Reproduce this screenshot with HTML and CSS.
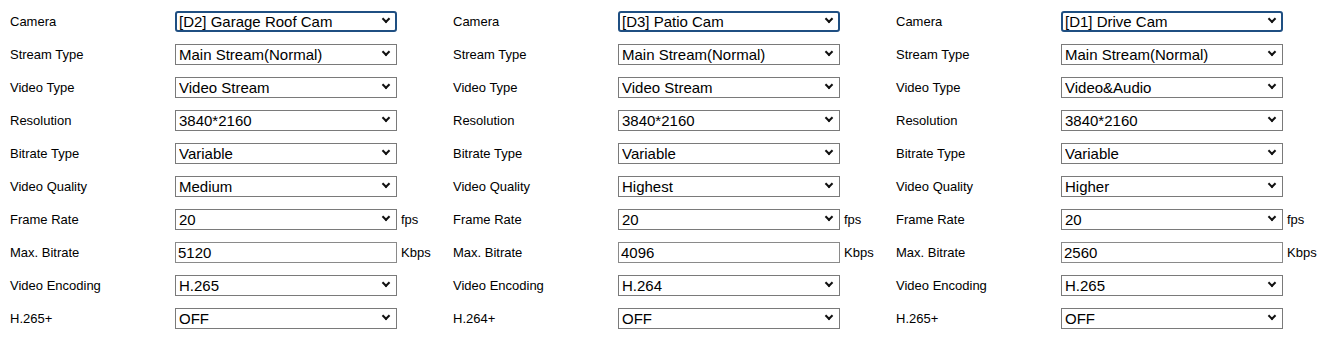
FILE: index.html
```html
<!DOCTYPE html>
<html lang="en">
<head>
  <meta charset="UTF-8">
  <title>Video Settings</title>
  <link rel="stylesheet" href="styles.css">
</head>
<body>

<div class="channels">

  <div class="channel">
    <label>Camera</label>
    <span class="sel"><select class="focus"><option>[D2] Garage Roof Cam</option></select></span>
    <span></span>
    <label>Stream Type</label>
    <span class="sel"><select><option>Main Stream(Normal)</option></select></span>
    <span></span>
    <label>Video Type</label>
    <span class="sel"><select><option>Video Stream</option></select></span>
    <span></span>
    <label>Resolution</label>
    <span class="sel"><select><option>3840*2160</option></select></span>
    <span></span>
    <label>Bitrate Type</label>
    <span class="sel"><select><option>Variable</option></select></span>
    <span></span>
    <label>Video Quality</label>
    <span class="sel"><select><option>Medium</option></select></span>
    <span></span>
    <label>Frame Rate</label>
    <span class="sel"><select><option>20</option></select></span>
    <span class="unit">fps</span>
    <label>Max. Bitrate</label>
    <input type="text" value="5120">
    <span class="unit">Kbps</span>
    <label>Video Encoding</label>
    <span class="sel"><select><option>H.265</option></select></span>
    <span></span>
    <label>H.265+</label>
    <span class="sel"><select><option>OFF</option></select></span>
    <span></span>
  </div>

  <div class="channel">
    <label>Camera</label>
    <span class="sel"><select class="focus"><option>[D3] Patio Cam</option></select></span>
    <span></span>
    <label>Stream Type</label>
    <span class="sel"><select><option>Main Stream(Normal)</option></select></span>
    <span></span>
    <label>Video Type</label>
    <span class="sel"><select><option>Video Stream</option></select></span>
    <span></span>
    <label>Resolution</label>
    <span class="sel"><select><option>3840*2160</option></select></span>
    <span></span>
    <label>Bitrate Type</label>
    <span class="sel"><select><option>Variable</option></select></span>
    <span></span>
    <label>Video Quality</label>
    <span class="sel"><select><option>Highest</option></select></span>
    <span></span>
    <label>Frame Rate</label>
    <span class="sel"><select><option>20</option></select></span>
    <span class="unit">fps</span>
    <label>Max. Bitrate</label>
    <input type="text" value="4096">
    <span class="unit">Kbps</span>
    <label>Video Encoding</label>
    <span class="sel"><select><option>H.264</option></select></span>
    <span></span>
    <label>H.264+</label>
    <span class="sel"><select><option>OFF</option></select></span>
    <span></span>
  </div>

  <div class="channel">
    <label>Camera</label>
    <span class="sel"><select class="focus"><option>[D1] Drive Cam</option></select></span>
    <span></span>
    <label>Stream Type</label>
    <span class="sel"><select><option>Main Stream(Normal)</option></select></span>
    <span></span>
    <label>Video Type</label>
    <span class="sel"><select><option>Video&amp;Audio</option></select></span>
    <span></span>
    <label>Resolution</label>
    <span class="sel"><select><option>3840*2160</option></select></span>
    <span></span>
    <label>Bitrate Type</label>
    <span class="sel"><select><option>Variable</option></select></span>
    <span></span>
    <label>Video Quality</label>
    <span class="sel"><select><option>Higher</option></select></span>
    <span></span>
    <label>Frame Rate</label>
    <span class="sel"><select><option>20</option></select></span>
    <span class="unit">fps</span>
    <label>Max. Bitrate</label>
    <input type="text" value="2560">
    <span class="unit">Kbps</span>
    <label>Video Encoding</label>
    <span class="sel"><select><option>H.265</option></select></span>
    <span></span>
    <label>H.265+</label>
    <span class="sel"><select><option>OFF</option></select></span>
    <span></span>
  </div>

</div>

</body>
</html>
```

FILE: styles.css
```css
body {
  font-family: 'Liberation Sans', Arial, sans-serif;
  background-color: #fff;
  color: #000;
  margin: 0;
  padding: 0;
  overflow: hidden;
}

.channels {
  display: flex;
  padding: 5px 0 0 10px;
}

.channel {
  flex: 0 0 443px;
  display: grid;
  grid-template-columns: 165px 222px auto;
  grid-auto-rows: 33px;
  align-items: center;
}

.channel label {
  font-size: 13px;
}

.sel {
  position: relative;
  display: block;
  height: 21px;
}

.sel::after {
  content: "";
  position: absolute;
  right: 8px;
  top: 5px;
  width: 4px;
  height: 4px;
  border-right: 2.5px solid #111;
  border-bottom: 2.5px solid #111;
  transform: rotate(45deg);
  pointer-events: none;
}

select,
input {
  -webkit-appearance: none;
  appearance: none;
  box-sizing: border-box;
  width: 222px;
  height: 21px;
  margin: 0;
  font-family: inherit;
  font-size: 15px;
  color: #000;
  background: #fff;
  border: 1px solid #7a7a7a;
  border-radius: 0;
  outline: none;
}

select {
  padding: 0 20px 0 3px;
}

select.focus {
  border: 2px solid #1f4f82;
  border-radius: 3px;
  padding-left: 2px;
}

input {
  padding: 0 2px;
  border-color: #8a8a8a;
}

.unit {
  font-size: 13px;
  padding-left: 4px;
}
```
